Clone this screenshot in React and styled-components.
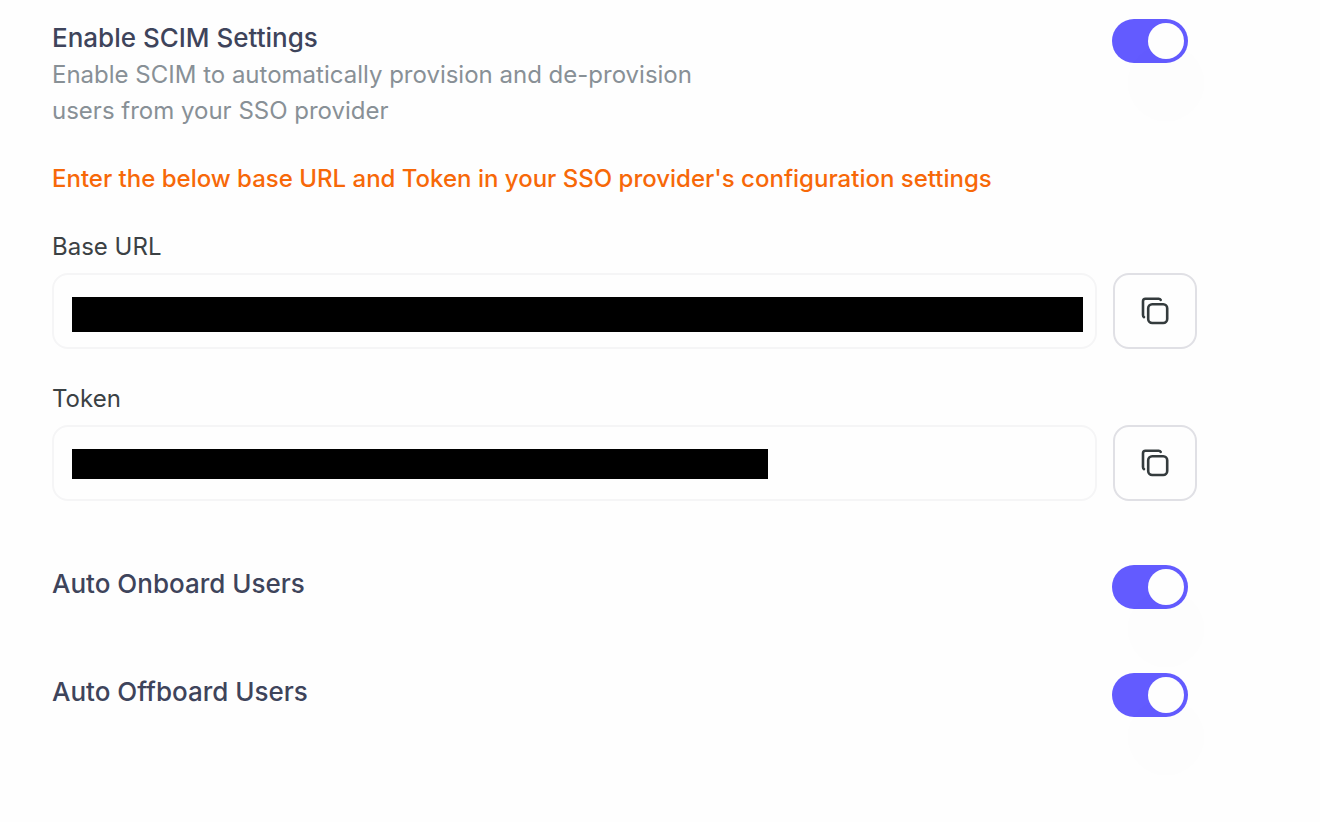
import React, { useState } from "react";
import styled, { createGlobalStyle } from "styled-components";

const GlobalStyle = createGlobalStyle`
  *, *::before, *::after { box-sizing: border-box; }
  body {
    margin: 0;
    background: #fefefe;
    font-family: Inter, "Liberation Sans", sans-serif;
    font-size: 24px;
    line-height: 36px;
    color: #3b4144;
  }
`;

const Page = styled.main`
  padding: 19px 123px 96px 52px;
`;

const SettingRow = styled.section`
  display: flex;
  justify-content: space-between;
  align-items: flex-start;
  gap: 32px;
  padding-right: 9px;
  margin-top: ${(p) => p.$top}px;
`;

const SettingText = styled.div`
  max-width: 680px;
`;

const SettingTitle = styled.label`
  display: block;
  font-size: 26px;
  line-height: 38px;
  font-weight: 500;
  color: #3e445b;
`;

const Description = styled.p`
  margin: 0;
  color: #889096;
`;

const Switch = styled.input`
  appearance: none;
  flex: none;
  display: flex;
  width: 76px;
  height: 44px;
  margin: 0;
  padding: 4px;
  border-radius: 22px;
  background: #c1c8cd;
  cursor: pointer;

  &::before {
    content: "";
    width: 36px;
    height: 36px;
    border-radius: 50%;
    background: #fefefe;
    box-shadow: 0 42px 2px 23px rgba(0, 0, 0, 0.004);
  }

  &:checked {
    justify-content: flex-end;
    background: #635bff;
  }
`;

const Notice = styled.p`
  margin: 32px 0;
  font-weight: 500;
  color: #f76808;
`;

const Field = styled.div`
  margin-bottom: 32px;
`;

const FieldLabel = styled.label`
  display: block;
  margin-bottom: 8px;
`;

const FieldRow = styled.div`
  display: flex;
  gap: 16px;
`;

const InputBox = styled.div`
  position: relative;
  flex: 1;
  height: 76px;
`;

const TextInput = styled.input`
  width: 100%;
  height: 100%;
  padding: 0 18px;
  border: 2px solid #f5f5f6;
  border-radius: 16px;
  background: #fefefe;
  font: inherit;
  color: inherit;
`;

const Redaction = styled.span`
  position: absolute;
  top: 24px;
  left: 20px;
  width: ${(p) => p.$width};
  height: ${(p) => p.$height}px;
  background: #000;
  pointer-events: none;
`;

const CopyButton = styled.button`
  display: grid;
  place-items: center;
  flex: none;
  width: 84px;
  height: 76px;
  padding: 0;
  border: 2px solid #e0e0e5;
  border-radius: 16px;
  background: #fefefe;
  color: #343b3d;
  cursor: pointer;
`;

function CopyIcon() {
  return (
    <svg width="32" height="32" viewBox="0 0 32 32" fill="none" stroke="currentColor" strokeWidth="2.6" strokeLinecap="round" strokeLinejoin="round" aria-hidden="true">
      <rect x="9.2" y="9.2" width="19" height="18.8" rx="4" />
      <path d="M5 22.2Q4 21.6 4 20V6.3a2.5 2.5 0 0 1 2.5-2.5h13.2q1.4 0 2 1" />
    </svg>
  );
}

function Setting({ id, title, top, children }) {
  const [on, setOn] = useState(true);
  return (
    <SettingRow $top={top}>
      <SettingText>
        <SettingTitle htmlFor={id}>{title}</SettingTitle>
        {children}
      </SettingText>
      <Switch id={id} type="checkbox" role="switch" checked={on} onChange={() => setOn(!on)} />
    </SettingRow>
  );
}

function CopyField({ id, label, width, height }) {
  return (
    <Field>
      <FieldLabel htmlFor={id}>{label}</FieldLabel>
      <FieldRow>
        <InputBox>
          <TextInput id={id} type="text" readOnly />
          <Redaction $width={width} $height={height} />
        </InputBox>
        <CopyButton type="button" aria-label={`Copy ${label}`}>
          <CopyIcon />
        </CopyButton>
      </FieldRow>
    </Field>
  );
}

export default function App() {
  return (
    <>
      <GlobalStyle />
      <Page>
        <Setting id="scim" title="Enable SCIM Settings" top={0}>
          <Description>Enable SCIM to automatically provision and de-provision users from your SSO provider</Description>
        </Setting>
        <Notice>Enter the below base URL and Token in your SSO provider's configuration settings</Notice>
        <CopyField id="base-url" label="Base URL" width="calc(100% - 34px)" height={35} />
        <CopyField id="token" label="Token" width="calc(67% - 4px)" height={30} />
        <Setting id="onboard" title="Auto Onboard Users" top={64} />
        <Setting id="offboard" title="Auto Offboard Users" top={64} />
      </Page>
    </>
  );
}
